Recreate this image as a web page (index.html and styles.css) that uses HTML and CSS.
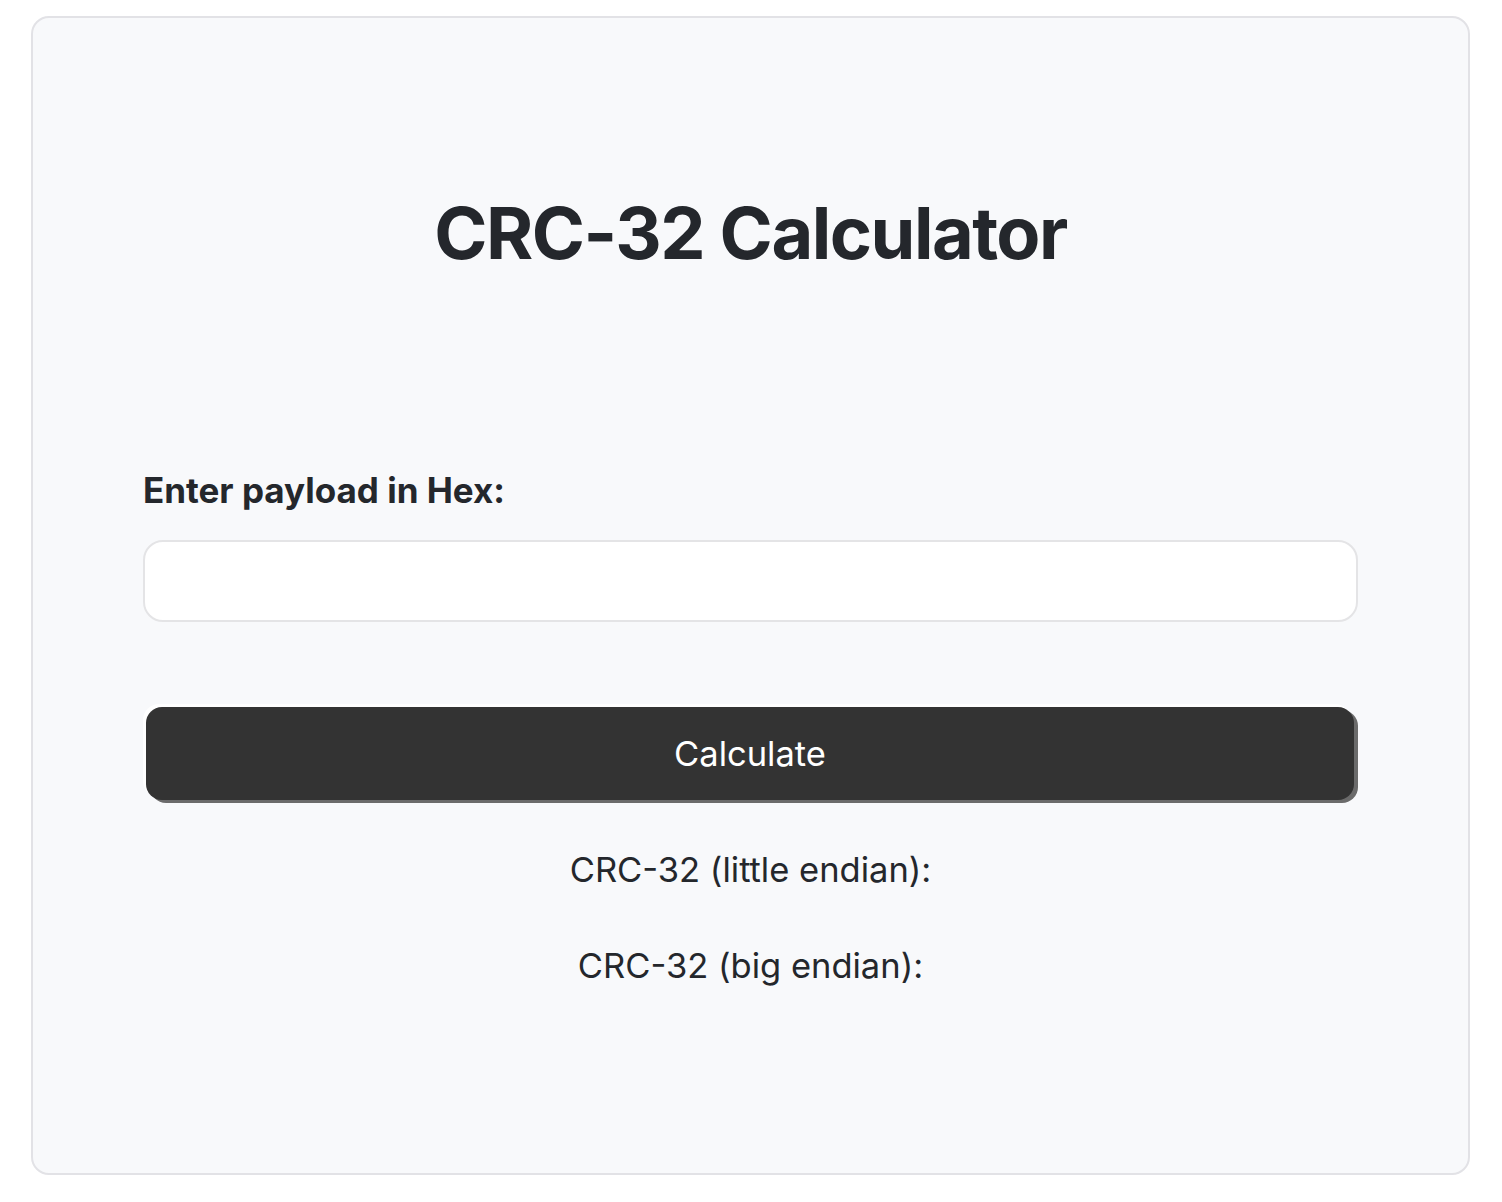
FILE: index.html
```html
<!DOCTYPE html>
<html lang="en">
<head>
<meta charset="utf-8">
<title>CRC-32 Calculator</title>
<link rel="stylesheet" href="styles.css">
</head>
<body>
<main class="card">
  <h1 class="title">CRC-32 Calculator</h1>
  <label class="label" for="payload">Enter payload in Hex:</label>
  <input class="input" id="payload" type="text">
  <button class="btn" type="button">Calculate</button>
  <p class="result">CRC-32 (little endian):</p>
  <p class="result result-big">CRC-32 (big endian):</p>
</main>
</body>
</html>
```
FILE: styles.css
```css
* { box-sizing: border-box; }
html, body { margin: 0; padding: 0; background: #ffffff; }
body {
  font-family: Inter, "Noto Sans", "Liberation Sans", sans-serif;
  color: #24272c;
  padding: 16px 32px 27px 31px;
}
.card {
  display: flex;
  flex-direction: column;
  height: 1159px;
  background: #f8f9fb;
  border: 2px solid #e2e2e6;
  border-radius: 18px;
  padding: 172px 110px 0 110px;
}
.title {
  margin: 0;
  font-size: 72px;
  line-height: 86px;
  font-weight: 700;
  letter-spacing: -1.5px;
  text-align: center;
}
.label {
  margin-top: 195px;
  font-size: 35px;
  line-height: 38px;
  font-weight: 700;
}
.input {
  margin-top: 31px;
  height: 82px;
  width: 100%;
  background: #ffffff;
  border: 2px solid #e4e4e6;
  border-radius: 20px;
  font: inherit;
  font-size: 32px;
  padding: 0 24px;
}
.btn {
  margin: 85px 0 0 3px;
  height: 93px;
  width: calc(100% - 7px);
  background: #333333;
  color: #ffffff;
  border: none;
  border-radius: 16px;
  font-family: inherit;
  font-size: 34.5px;
  box-shadow: -3px -3px 0 #ffffff, 4px 3px 0 #6b6b6b;
}
.result {
  margin: 51px 0 0 0;
  font-size: 34.5px;
  line-height: 38px;
  text-align: center;
}
.result-big {
  margin-top: 58px;
}
```
